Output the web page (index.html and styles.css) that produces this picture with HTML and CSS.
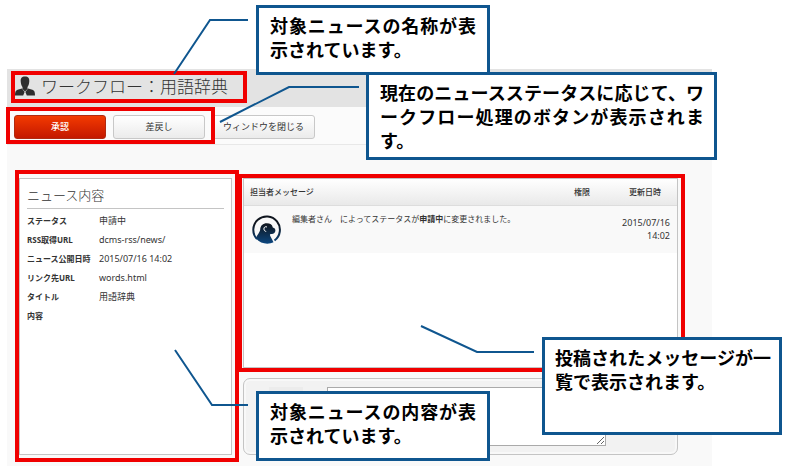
FILE: index.html
```html
<!DOCTYPE html>
<html lang="ja">
<head>
    <meta charset="UTF-8">
    <meta name="viewport" content="width=device-width, initial-scale=1.0">
    <title>ワークフロー：用語辞典</title>
    <link rel="stylesheet" href="styles.css">
</head>
<body>
    <main class="app">
        <header class="header">
            <svg class="user-icon" viewBox="0 0 20 20" aria-hidden="true">
                <path d="M10 .5c3.300 0 4.500 2 4.300 4.800-.1 2.500-.9 4.600-1.800 5.700v2L10 15.500 7.500 13v-2C6.600 9.900 5.800 7.800 5.700 5.300 5.500 2.500 6.700.5 10 .5z"/>
                <path d="M7 12.400L9.600 16 8.200 19.500H0c0-3.500.6-5 2.600-5.700zM13 12.400L10.400 16l1.400 3.500H20c0-3.500-.6-5-2.600-5.700z"/>
            </svg>
            <h1>ワークフロー：用語辞典</h1>
            <span class="frame"></span>
        </header>

        <div class="toolbar">
            <button class="btn btn-primary" type="button">承認</button>
            <button class="btn" type="button">差戻し</button>
            <button class="btn btn-close" type="button">ウィンドウを閉じる</button>
            <span class="frame"></span>
        </div>

        <div class="content">
            <section class="panel news">
                <h2>ニュース内容</h2>
                <table class="detail">
                    <tr><th scope="row">ステータス</th><td>申請中</td></tr>
                    <tr><th scope="row">RSS取得URL</th><td>dcms-rss/news/</td></tr>
                    <tr><th scope="row">ニュース公開日時</th><td>2015/07/16 14:02</td></tr>
                    <tr><th scope="row">リンク先URL</th><td>words.html</td></tr>
                    <tr><th scope="row">タイトル</th><td>用語辞典</td></tr>
                    <tr><th scope="row">内容</th><td></td></tr>
                </table>
                <span class="frame"></span>
            </section>

            <div class="column">
                <section class="panel messages">
                    <table class="list">
                        <thead>
                            <tr>
                                <th class="col-message" colspan="2">担当者メッセージ</th>
                                <th class="col-role">権限</th>
                                <th class="col-date">更新日時</th>
                            </tr>
                        </thead>
                        <tbody>
                            <tr>
                                <td class="col-avatar">
                                    <svg class="avatar" viewBox="0 0 30 30" aria-hidden="true">
                                        <defs>
                                            <linearGradient id="ink" x1="0" y1="0" x2="0" y2="30" gradientUnits="userSpaceOnUse">
                                                <stop offset="0.3" stop-color="#10161f"/>
                                                <stop offset="1" stop-color="#0b4a86"/>
                                            </linearGradient>
                                        </defs>
                                        <path d="M5 24A13.300 13.300 0 1 1 22.500 25.500" fill="none" stroke="url(#ink)" stroke-width="2"/>
                                        <path d="M4 23.500C5 19.500 8 17.500 8.200 14.500 8.300 10.500 11 8.200 14.800 8.200c3.400 0 5.400 1.400 6 4.200 1.700.3 2.700 1.600 2.600 3.200-.1 2.200-1.800 3.600-4 3.400-1 0-1.600.4-1.400 1.200.4 1.600 2 3.600 3.500 7C16.500 29.800 8.500 29 4 23.500z" fill="url(#ink)"/>
                                        <path d="M15 12c-1.700-.9-3.200.3-3.100 2 .1 1.500 1 2.300 2.300 2.400" fill="none" stroke="#fff" stroke-width="1"/>
                                    </svg>
                                </td>
                                <td class="col-text">編集者さん　によってステータスが<b>申請中</b>に変更されました。</td>
                                <td></td>
                                <td class="col-date">2015/07/16 14:02</td>
                            </tr>
                        </tbody>
                    </table>
                    <span class="frame"></span>
                </section>

                <form class="post">
                    <div class="post-avatar"></div>
                    <textarea class="post-text" aria-label="メッセージ"></textarea>
                </form>
            </div>
        </div>
    </main>

    <!-- leader lines from the notes to the framed areas -->
    <svg class="leaders" width="787" height="466" aria-hidden="true">
        <polyline points="174,74 210,20 248,20"/>
        <polyline points="220,122 289,87 359,87"/>
        <polyline points="421,326 477,352 534,352"/>
        <polyline points="175,350 212,405 248,405"/>
    </svg>

    <aside class="note note-title">対象ニュースの名称が表示されています。</aside>
    <aside class="note note-buttons">現在のニュースステータスに応じて、ワークフロー処理のボタンが表示されます。</aside>
    <aside class="note note-messages">投稿されたメッセージが一覧で表示されます。</aside>
    <aside class="note note-news">対象ニュースの内容が表示されています。</aside>
</body>
</html>
```

FILE: styles.css
```css
* {
    padding: 0;
    margin: 0;
    box-sizing: border-box;
}

:root {
    --note-color: #0f568f;
    --frame-color: #f00000;
    --line-color: #c4c4c4;
    --text-color: #333;
}

body {
    position: relative;
    min-height: 100vh;
    padding: 69px 75px 0 7px;
    background-color: #fff;
    color: var(--text-color);
    font-family: "Noto Sans", "Noto Sans CJK JP", sans-serif;
    font-size: 8px;
    overflow: hidden;
}

.app {
    min-height: calc(100vh - 69px);
    background-color: #f9f9f9;
}

/* red frames round the areas being explained */
.frame {
    position: absolute;
    border: 4px solid var(--frame-color);
    pointer-events: none;
}

.header {
    position: relative;
    display: flex;
    align-items: center;
    gap: 6px;
    height: 38px;
    padding: 0 8px 4px;
    background-color: #e3e3e3;
}

.header h1 {
    font-family: "Noto Sans CJK JP", sans-serif;
    font-size: 17px;
    font-weight: 300;
    line-height: 24px;
}

.header .frame {
    top: 2px;
    left: 4px;
    width: 236px;
    height: 32px;
}

.user-icon {
    width: 20px;
    height: 20px;
    fill: #2e2e2e;
}

.toolbar {
    position: relative;
    display: flex;
    gap: 7px;
    padding: 8px 7px 5px;
    border-bottom: 1px solid #e8e8e8;
    background-color: #fbfbfb;
}

.toolbar .frame {
    top: 0;
    left: -1px;
    width: 209px;
    height: 37px;
}

.btn {
    width: 92px;
    height: 24px;
    border: 1px solid #c8c8c8;
    border-radius: 3px;
    background: linear-gradient(#fff, #ebebeb);
    color: var(--text-color);
    font-family: "Noto Sans CJK JP", sans-serif;
    font-size: 9px;
    line-height: 20px;
    cursor: pointer;
}

.btn-primary {
    border-color: #b02a10;
    background: linear-gradient(#f33a00, #c41800);
    color: #fff;
    font-weight: 500;
}

.btn-close {
    width: 103px;
}

.content {
    display: flex;
    gap: 11px;
    padding: 33px 34px 11px 12px;
}

.panel {
    position: relative;
    border: 1px solid var(--line-color);
    background-color: #fff;
}

.news {
    width: 213px;
    padding: 5px 7px;
}

.news .frame {
    inset: -9px -8px -8px -5px;
}

.news h2 {
    padding-bottom: 2px;
    border-bottom: 1px solid var(--line-color);
    font-family: "Noto Sans CJK JP", sans-serif;
    font-size: 13px;
    font-weight: 300;
    line-height: 22px;
}

.detail {
    margin-top: 2px;
    border-collapse: collapse;
}

.detail th,
.detail td {
    height: 19px;
    line-height: 12px;
    text-align: left;
    white-space: nowrap;
}

.detail th {
    width: 72px;
    font-weight: bold;
}

.detail td {
    font-size: 9px;
}

.column {
    display: flex;
    flex: 1;
    flex-direction: column;
    gap: 10px;
}

.messages {
    min-height: 190px;
}

.messages .frame {
    inset: -5px -8px -5px -6px;
}

.list {
    width: 100%;
    border-collapse: collapse;
}

.list th {
    height: 26px;
    border-bottom: 1px solid #ddd;
    background: linear-gradient(#fff, #e9e9e9);
    font-weight: 500;
    text-align: center;
}

.list td {
    height: 48px;
    background-color: #f9f9f9;
    line-height: 13px;
    vertical-align: top;
}

.list .col-message {
    padding-left: 6px;
    text-align: left;
}

.list .col-avatar {
    width: 48px;
    padding: 9px 0 0 8px;
}

.list .col-text {
    padding-top: 6px;
    white-space: nowrap;
}

.list .col-role {
    width: 62px;
}

.list .col-date {
    width: 64px;
}

.list td.col-date {
    padding: 10px 7px 0 0;
    font-size: 9px;
    text-align: right;
}

.avatar {
    display: block;
    width: 30px;
    height: 30px;
}

.post {
    display: flex;
    gap: 24px;
    height: 77px;
    padding: 8px 71px 8px 25px;
    border: 1px solid var(--line-color);
    border-radius: 7px;
    background-color: #f2f2f2;
    box-shadow: inset 0 0 0 2px #f8f8f8;
}

.post-avatar {
    width: 34px;
    height: 34px;
    background-color: #ececec;
}

.post-text {
    flex: 1;
    border: 1px solid #aaa;
    background-color: #fff;
}

.leaders {
    position: absolute;
    top: 0;
    left: 0;
    fill: none;
    stroke: var(--note-color);
    stroke-width: 2;
    pointer-events: none;
}

/* explanatory notes laid over the screen */
.note {
    position: absolute;
    width: 234px;
    min-height: 70px;
    padding: 5px 11px;
    border: 3px solid var(--note-color);
    background-color: #fff;
    color: #000;
    font-family: "Noto Sans CJK JP", sans-serif;
    font-size: 18px;
    font-weight: bold;
    line-height: 24px;
    text-align: justify;
}

.note-title {
    top: 5px;
    left: 256px;
}

.note-buttons {
    top: 72px;
    left: 366px;
    width: 351px;
    min-height: 87px;
    padding-right: 10px;
}

.note-messages {
    top: 337px;
    left: 542px;
    width: 240px;
    min-height: 98px;
    padding: 5px 8px 5px 10px;
}

.note-news {
    top: 391px;
    left: 256px;
}
```
